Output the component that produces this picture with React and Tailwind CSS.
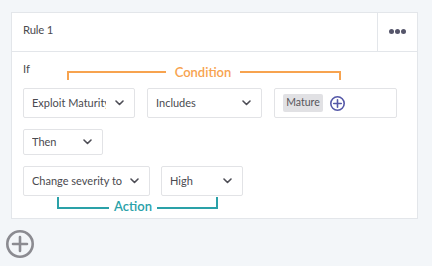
function Chevron() {
  return (
    <svg width="9" height="6" viewBox="0 0 9 6" fill="none" className="shrink-0">
      <path d="M1 1l3.5 3.5L8 1" stroke="#4d4d55" strokeWidth="1.6" strokeLinecap="round" strokeLinejoin="round" />
    </svg>
  );
}

function Select({ label, className, tight }) {
  return (
    <div
      className={`flex items-center justify-between overflow-hidden rounded-[2px] border border-[#e2e3e6] bg-white pl-[8px] pr-[10px] text-[11px] text-[#4a4a4f] ${className}`}
    >
      <span className="min-w-0 overflow-hidden whitespace-nowrap">{label}</span>
      <span className={tight ? 'ml-[4px] flex' : 'ml-[9px] flex'}>
        <Chevron />
      </span>
    </div>
  );
}

function PlusCircle({ size, stroke, color, sw }) {
  const r = size / 2 - sw / 2;
  const c = size / 2;
  const a = size * 0.25;
  return (
    <svg width={size} height={size} viewBox={`0 0 ${size} ${size}`} fill="none" className="shrink-0">
      <circle cx={c} cy={c} r={r} stroke={color} strokeWidth={sw} />
      <path d={`M${c} ${c - a}V${c + a}M${c - a} ${c}H${c + a}`} stroke={color} strokeWidth={stroke} strokeLinecap="round" />
    </svg>
  );
}

export default function App() {
  return (
    <div
      className="h-[266px] w-[432px] overflow-hidden bg-[#f3f6f9] pl-[6px] pt-[12px]"
      style={{ fontFamily: 'Lato, "Open Sans", sans-serif' }}
    >
      <div className="ml-[5px] w-[407px] border border-[#e3e6ea] bg-white">
        <div className="flex h-[39px] border-b border-[#e3e6ea]">
          <div className="flex flex-1 items-center pb-[3px] pl-[11px] text-[11.3px] tracking-[-0.2px] text-[#4a4a4f]">
            Rule 1
          </div>
          <div className="flex w-[40px] items-center justify-center gap-[1.5px] border-l border-[#e3e6ea] pb-[1px]">
            <span className="h-[4.5px] w-[4.5px] rounded-full bg-[#55556a]" />
            <span className="h-[4.5px] w-[4.5px] rounded-full bg-[#55556a]" />
            <span className="h-[4.5px] w-[4.5px] rounded-full bg-[#55556a]" />
          </div>
        </div>

        <div className="px-[11px] pb-[5px] pt-[13px]">
          <div className="flex h-[15px] items-start">
            <div className="-mt-[3px] w-[44px] text-[11.3px] leading-[14px] text-[#4a4a4f]">If</div>
            <div className="flex items-start">
              <div className="mt-[6px] h-[9px] w-[99px] border-l-2 border-t-2 border-[#f7a34f]" />
              <div className="mx-[7px] w-[60px] text-center text-[13px] font-semibold leading-[14px] text-[#f7a34f]">Condition</div>
              <div className="mt-[6px] h-[9px] w-[101px] border-r-2 border-t-2 border-[#f7a34f]" />
            </div>
          </div>

          <div className="mt-[8px] flex gap-[12px]">
            <Select label="Exploit Maturity" className="h-[30px] w-[112px]" />
            <Select label="Includes" className="h-[30px] w-[115px]" />
            <div className="flex h-[30px] w-[123px] items-center gap-[7px] rounded-[2px] border border-[#e2e3e6] pl-[8px]">
              <span className="flex h-[18px] w-[40px] items-center justify-center rounded-[2px] bg-[#e1e1e4] text-[10.5px] text-[#55555a]">
                Mature
              </span>
              <PlusCircle size={15} stroke={1.6} sw={1.6} color="#5558a8" />
            </div>
          </div>

          <div className="mt-[11px] flex">
            <Select label="Then" className="h-[26px] w-[80px]" />
          </div>

          <div className="mt-[11px] flex gap-[11px]">
            <Select label="Change severity to" tight className="h-[30px] w-[127px]" />
            <Select label="High" className="h-[30px] w-[82px]" />
          </div>

          <div className="ml-[34px] mt-[1px] flex items-start">
            <div className="h-[12px] w-[52px] border-b-2 border-l-2 border-[#2aa1a8]" />
            <div className="mx-[4px] mt-[2px] w-[40px] text-center text-[13px] font-semibold leading-[14px] text-[#2aa1a8]">Action</div>
            <div className="h-[12px] w-[61px] border-b-2 border-r-2 border-[#2aa1a8]" />
          </div>
        </div>
      </div>

      <div className="mt-[11px] flex">
        <PlusCircle size={28} stroke={2.6} sw={2.6} color="#8b8b91" />
      </div>
    </div>
  );
}
